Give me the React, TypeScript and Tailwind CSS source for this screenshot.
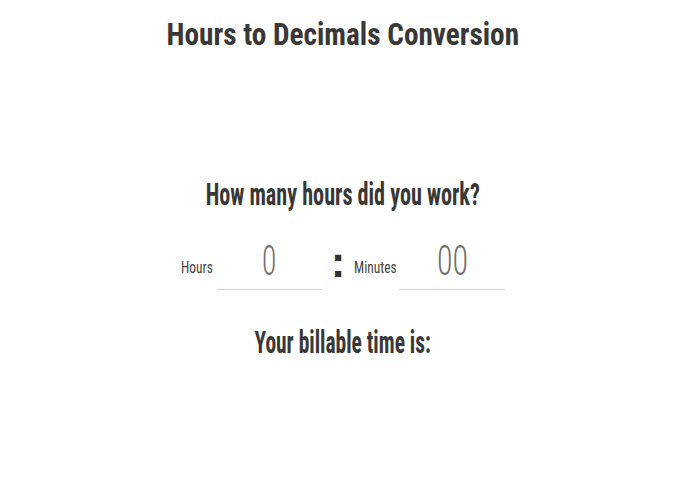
export default function App() {
  const f = { fontFamily: '"Roboto Condensed", "Liberation Sans", sans-serif' };
  return (
    <div className="w-[700px] h-[500px] bg-white text-[#333]" style={f}>
      <div className="w-[686px]">
        <div className="pt-[14px] text-center leading-[40px]">
          <h1 className="inline-block origin-center scale-x-[0.914] whitespace-nowrap text-[32px] font-bold text-[#383838]">Hours to Decimals Conversion</h1>
        </div>
        <div className="mt-[115px] text-center leading-[40px]">
          <h2 className="inline-block origin-center scale-x-[0.715] whitespace-nowrap text-[31px] font-bold text-[#383838]">How many hours did you work?</h2>
        </div>
        <div className="mt-[17px] flex items-end pl-[181px]">
          <div className="mb-[14px] w-[36px] text-[16px] leading-[16px] text-[#444]">
            <span className="inline-block origin-left scale-x-[0.84]">Hours</span>
          </div>
          <div className="w-[105px] border-b border-[#d0d0d0] pb-[4px] text-center text-[42px] font-light leading-[48px] text-[#6f6f6f]">
            <span className="inline-block origin-center scale-x-[0.7]">0</span>
          </div>
          <div className="mb-[6px] w-[32px] text-center font-['Liberation_Sans',sans-serif] text-[44px] font-bold leading-[44px] text-[#333]">:</div>
          <div className="mb-[14px] w-[45px] text-[16px] leading-[16px] text-[#444]">
            <span className="inline-block origin-left scale-x-[0.84]">Minutes</span>
          </div>
          <div className="w-[106px] border-b border-[#d0d0d0] pb-[4px] text-center text-[42px] font-light leading-[48px] text-[#6f6f6f]">
            <span className="inline-block origin-center scale-x-[0.76]">00</span>
          </div>
        </div>
        <div className="mt-[32px] text-center leading-[40px]">
          <h2 className="inline-block origin-center scale-x-[0.67] whitespace-nowrap text-[32px] font-bold text-[#383838]">Your billable time is:</h2>
        </div>
      </div>
    </div>
  );
}
